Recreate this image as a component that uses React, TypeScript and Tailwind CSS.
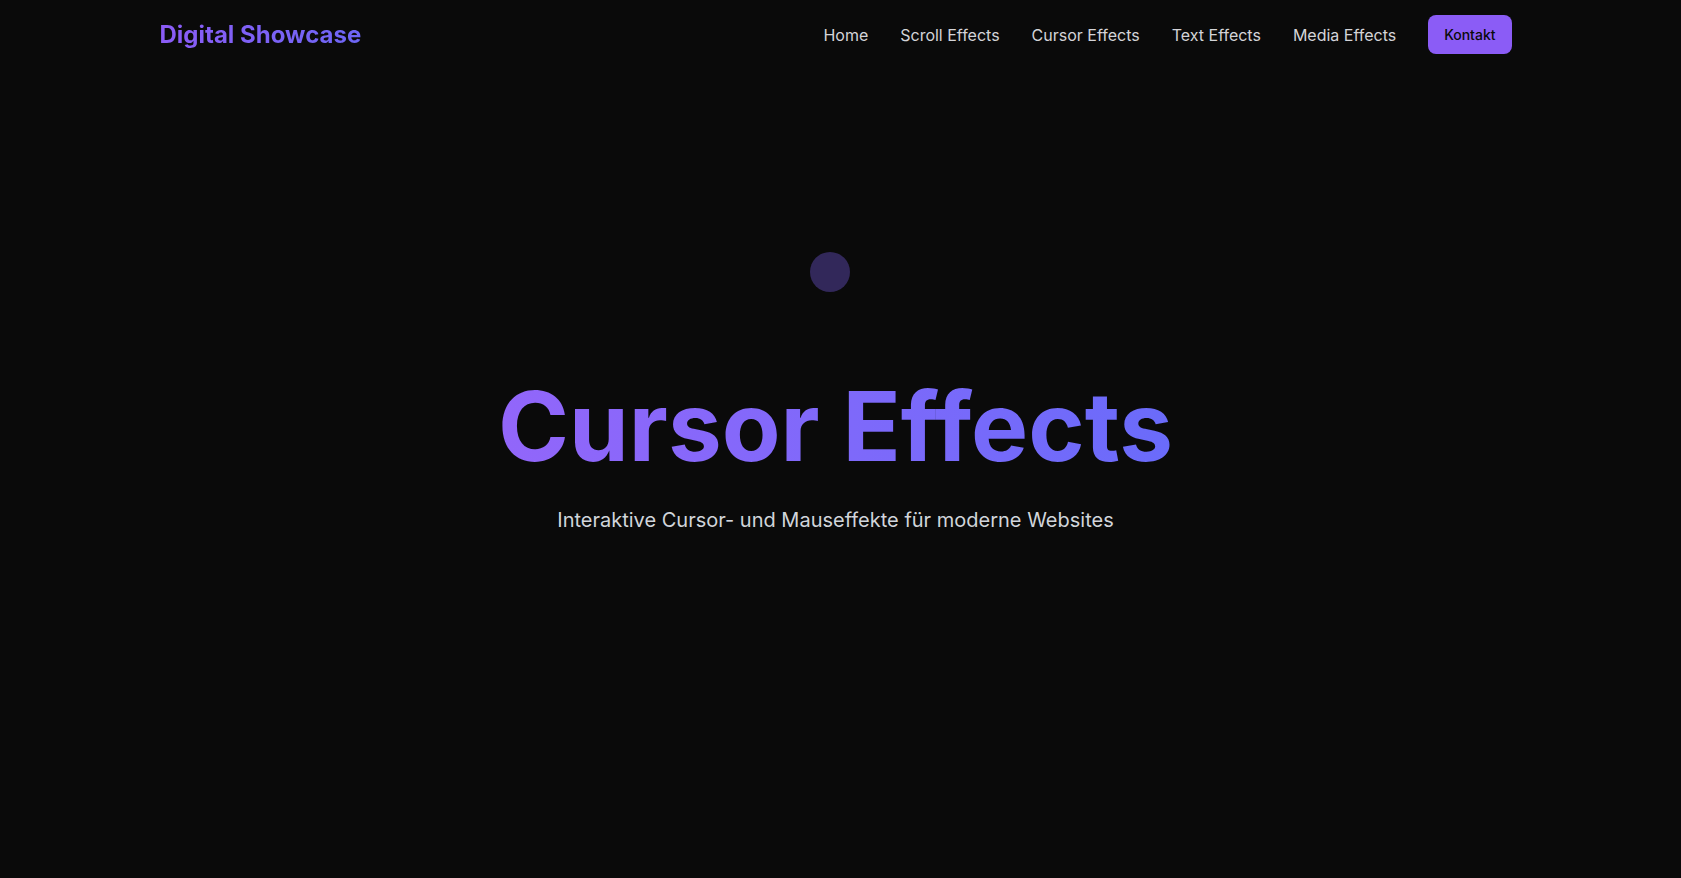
import React from "react";

export default function App() {
  const links = ["Home", "Scroll Effects", "Cursor Effects", "Text Effects", "Media Effects"];
  return (
    <div className="relative min-h-[878px] w-full bg-[#0a0a0a] font-['Inter',sans-serif] overflow-hidden">
      <div className="pr-[10px]">
        <header className="mx-auto max-w-[1400px] px-6 py-[15px] flex items-center justify-between">
          <a className="text-2xl font-bold bg-gradient-to-r from-[#8b5cf6] to-[#6d66f5] bg-clip-text text-transparent">
            Digital Showcase
          </a>
          <nav className="flex items-center gap-8">
            {links.map((l) => (
              <a key={l} className="text-base text-[#d4d4d8]">
                {l}
              </a>
            ))}
            <button className="flex h-[39px] items-center rounded-lg bg-[#8b5cf6] px-4 text-sm font-medium leading-5 text-[#0a0a0a]">
              Kontakt
            </button>
          </nav>
        </header>
        <main className="flex flex-col items-center pt-[309px]">
          <h1 className="inline-block text-8xl leading-none font-bold bg-gradient-to-r from-[#9266fa] to-[#6a6bfa] bg-clip-text text-transparent">
            Cursor Effects
          </h1>
          <p className="mt-8 text-xl text-[#d1d5db]">
            Interaktive Cursor- und Mauseffekte für moderne Websites
          </p>
        </main>
      </div>
      <div className="absolute left-[810px] top-[252px] h-10 w-10 rounded-full bg-[#32285a]" />
    </div>
  );
}
